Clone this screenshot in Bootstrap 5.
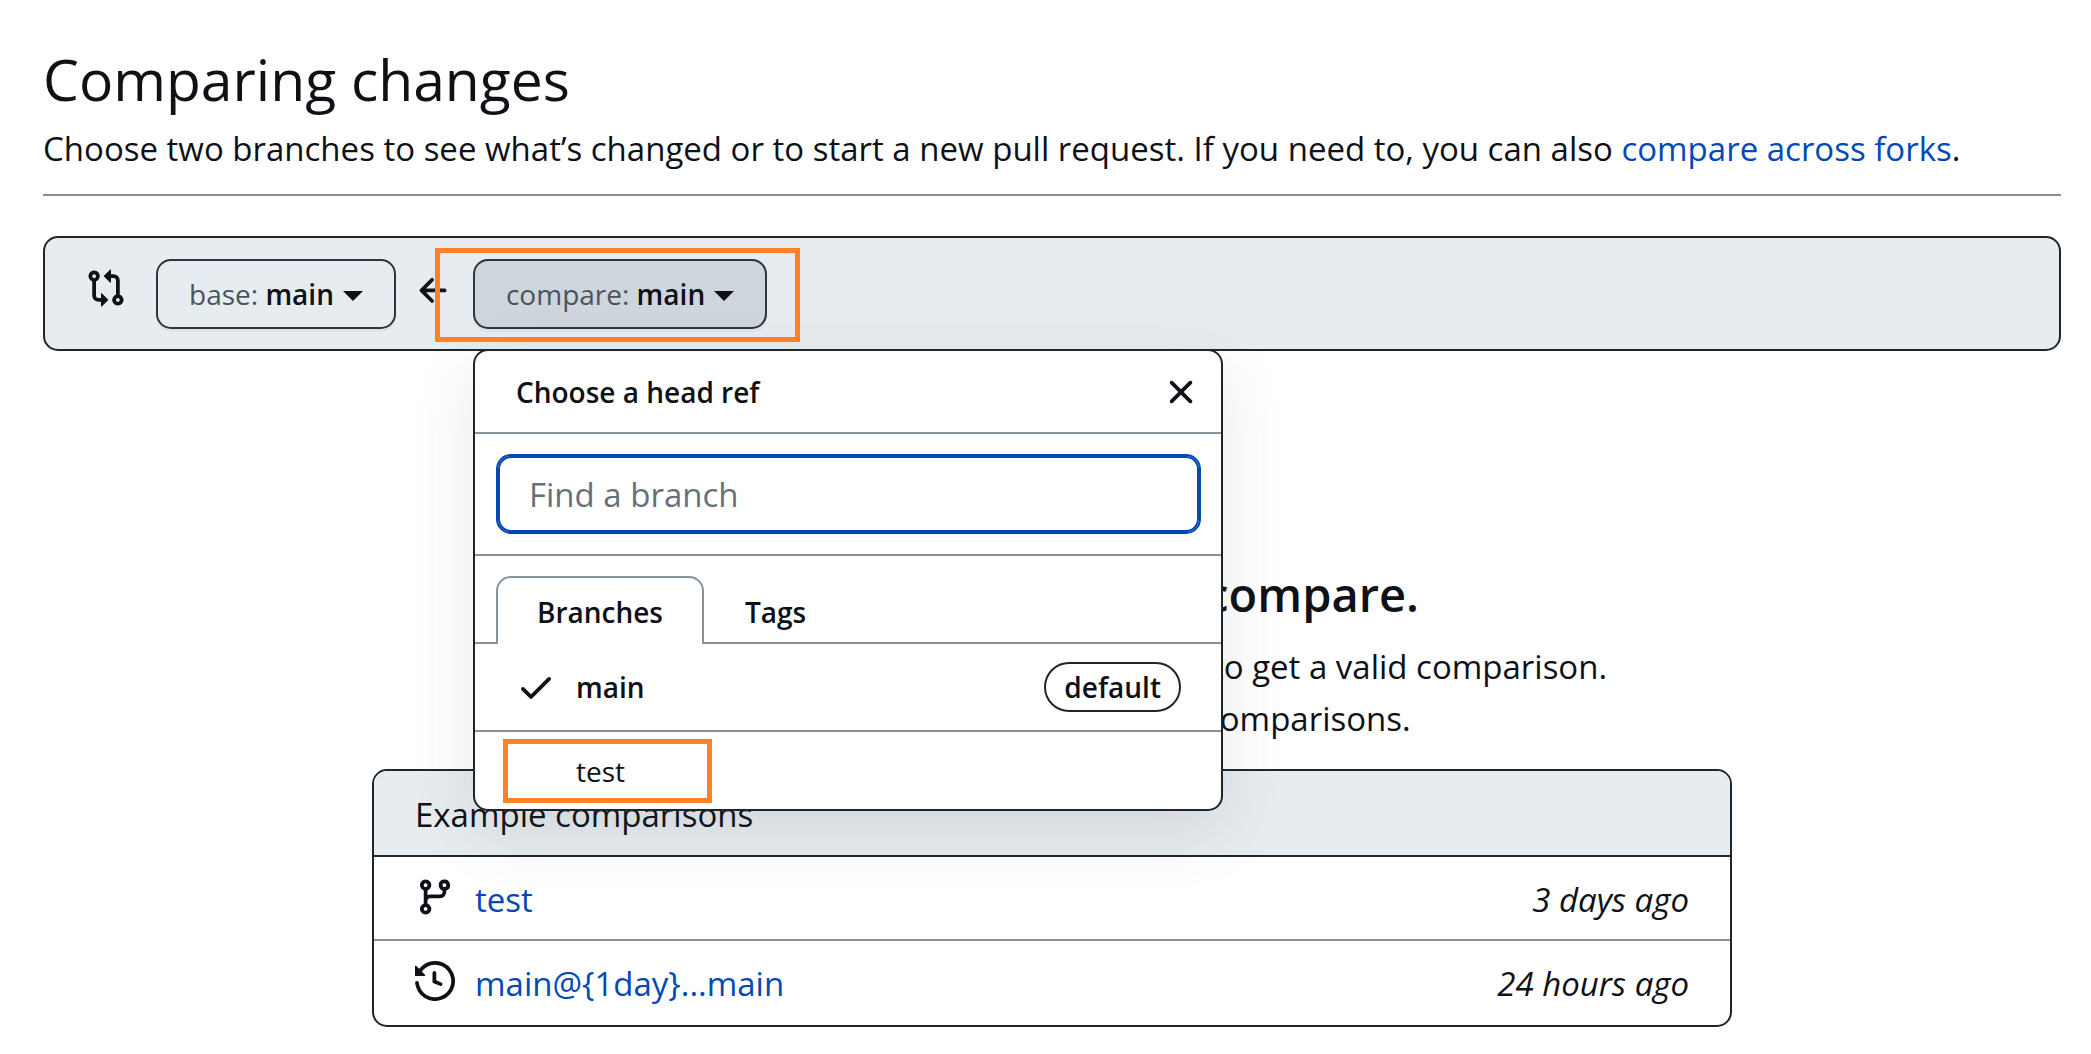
<!DOCTYPE html>
<html lang="en">
<head>
<meta charset="utf-8">
<meta name="viewport" content="width=device-width, initial-scale=1">
<title>Comparing changes</title>
<link href="https://cdn.jsdelivr.net/npm/bootstrap@5.3.0/dist/css/bootstrap.min.css" rel="stylesheet">
<style>
  :root { --ink: #0e1116; --line: #20252c; --line-muted: #88929d; --subtle: #e7ecf0; --accent: #0349b4; --marker: #ff8127; }
  body { font-family: "Open Sans", "Noto Sans", sans-serif; font-size: 33px; line-height: 52px; color: var(--ink); background: #fff; }
  a { color: var(--accent); text-decoration: none; }
  .page { padding: 41px 30px 24px 43px; }
  .page-title { font-size: 57px; line-height: 76px; font-weight: 400; margin: 0 0 6px; }
  .page-head { border-bottom: 2px solid var(--line-muted); padding-bottom: 19px; margin-bottom: 40px; }
  .range-bar { background: var(--subtle); border: 2px solid var(--line); border-radius: 15px; padding: 21px 41px 20px; }
  .range-icon { margin: 0 30px 12px 0; }
  .arrow-icon { margin: 0 19px 6px 18px; }
  .ref-btn { height: 70px; padding: 0 31px; border: 2px solid #2f353c; border-radius: 15px; background: var(--subtle); color: var(--ink); font-size: 28px; line-height: 40px; font-weight: 600; box-shadow: 0 3px 0 rgba(31,35,40,.04); }
  .ref-btn span { color: #4b535d; font-weight: 500; }
  .ref-btn.picked { background: #ced5dc; }
  .caret { display: inline-block; border: 10px solid transparent; border-top-color: currentColor; border-bottom: 0; margin-left: 9px; vertical-align: 4px; }
  .marked::after { content: ""; position: absolute; border: 5px solid var(--marker); pointer-events: none; z-index: 30; }
  .ref-picker.marked::after { inset: -11px -33px -13px -38px; }
  .ref-menu { position: absolute; top: 90px; left: 0; z-index: 20; width: 750px; background: #fff; border: 2px solid var(--line); border-radius: 15px; overflow: hidden; font-size: 28px; line-height: 40px; box-shadow: 0 21px 62px rgba(66,74,83,.13); }
  .menu-head { height: 83px; padding: 0 16px 0 41px; border-bottom: 2px solid var(--line-muted); font-weight: 600; }
  .menu-close { background: none; border: 0; padding: 0; width: 48px; height: 48px; }
  .menu-filter { padding: 20px 20px 20px 21px; border-bottom: 2px solid var(--line-muted); }
  .menu-filter input { height: 80px; border: 2px solid var(--accent); border-radius: 15px; padding: 0 31px; font-size: 33px; color: var(--ink); box-shadow: inset 0 0 0 2px var(--accent); }
  .menu-filter input:focus { border-color: var(--accent); box-shadow: inset 0 0 0 2px var(--accent); }
  .menu-filter input::placeholder { color: #66707b; }
  .menu-tabs { padding: 20px 21px 0; box-shadow: inset 0 -2px 0 var(--line-muted); }
  .menu-tab { height: 68px; padding: 2px 39px 0; background: none; border: 2px solid transparent; border-bottom: 0; border-radius: 15px 15px 0 0; font-weight: 600; color: var(--ink); }
  .menu-tab.current { border-color: var(--line-muted); background: #fff; }
  .ref-row { padding: 0 40px 0 41px; gap: 20px; height: 77px; color: var(--ink); }
  .ref-row.first { height: 88px; border-bottom: 2px solid var(--line-muted); font-weight: 600; }
  .ref-row .slot { width: 40px; }
  .ref-row.marked::after { left: 28px; top: 7px; bottom: 6px; width: 209px; }
  .pill { border: 2px solid var(--line); border-radius: 25px; height: 50px; line-height: 46px; padding: 0 18px; }
  .blank { padding-top: 213px; }
  .blank-title { font-size: 47px; line-height: 60px; font-weight: 600; margin: 0 0 17px; }
  .blank-text { margin-bottom: 24px; }
  .examples { width: 100%; max-width: 1360px; border: 2px solid var(--line); border-radius: 15px; overflow: hidden; background: #fff; }
  .ex-head { background: var(--subtle); border-bottom: 2px solid var(--line); padding: 18px 41px 14px; }
  .ex-row { padding: 17px 41px 13px; gap: 20px; }
  .ex-row + .ex-row { border-top: 2px solid var(--line-muted); padding-bottom: 15px; }
  .ex-row svg { margin-bottom: 6px; }
</style>
<script src="https://cdn.jsdelivr.net/npm/bootstrap@5.3.0/dist/js/bootstrap.bundle.min.js"></script>
</head>
<body>
<main class="page">
  <header class="page-head">
    <h1 class="page-title">Comparing changes</h1>
    <p class="mb-0">Choose two branches to see what’s changed or to start a new pull request. If you need to, you can also <a href="#">compare across forks</a>.</p>
  </header>

  <section class="range-bar d-flex align-items-center" aria-label="Branch range">
    <svg class="range-icon flex-shrink-0" width="40" height="40" viewBox="0 0 16 16" fill="currentColor" aria-hidden="true"><path d="M9.573.677A.25.25 0 0 1 10 .854V2.5h1A2.5 2.5 0 0 1 13.5 5v5.628a2.251 2.251 0 1 1-1.5 0V5a1 1 0 0 0-1-1h-1v1.646a.25.25 0 0 1-.427.177L7.177 3.427a.25.25 0 0 1 0-.354ZM6 12v-1.646a.25.25 0 0 1 .427-.177l2.396 2.396a.25.25 0 0 1 0 .354l-2.396 2.396A.25.25 0 0 1 6 15.146V13.5H5A2.5 2.5 0 0 1 2.5 11V5.372a2.25 2.25 0 1 1 1.5 0V11a1 1 0 0 0 1 1ZM4 3.25a.75.75 0 1 0-1.5 0 .75.75 0 0 0 1.5 0ZM12.75 12a.75.75 0 1 0 0 1.5.75.75 0 0 0 0-1.5Z"/></svg>
    <button type="button" class="ref-btn"><span>base:</span> main<i class="caret"></i></button>
    <svg class="arrow-icon flex-shrink-0" width="40" height="40" viewBox="0 0 16 16" fill="currentColor" aria-hidden="true"><path d="M7.78 12.53a.75.75 0 0 1-1.06 0L2.47 8.28a.75.75 0 0 1 0-1.06l4.25-4.25a.751.751 0 0 1 1.042.018.751.751 0 0 1 .018 1.042L4.81 7h7.44a.75.75 0 0 1 0 1.5H4.81l2.97 2.97a.75.75 0 0 1 0 1.06Z"/></svg>
    <div class="ref-picker marked position-relative">
      <button type="button" class="ref-btn picked" aria-expanded="true"><span>compare:</span> main<i class="caret"></i></button>
      <div class="ref-menu">
        <div class="menu-head d-flex align-items-center justify-content-between">
          <span>Choose a head ref</span>
          <button type="button" class="menu-close d-flex align-items-center justify-content-center" aria-label="Close">
            <svg width="40" height="40" viewBox="0 0 16 16" fill="#0e1116" aria-hidden="true"><path d="M3.72 3.72a.75.75 0 0 1 1.06 0L8 6.94l3.22-3.22a.749.749 0 0 1 1.275.326.749.749 0 0 1-.215.734L9.06 8l3.22 3.22a.749.749 0 0 1-.326 1.275.749.749 0 0 1-.734-.215L8 9.06l-3.22 3.22a.751.751 0 0 1-1.042-.018.751.751 0 0 1-.018-1.042L6.94 8 3.72 4.78a.75.75 0 0 1 0-1.06Z"/></svg>
          </button>
        </div>
        <div class="menu-filter">
          <input type="text" class="form-control" placeholder="Find a branch" aria-label="Find a branch">
        </div>
        <div class="menu-tabs d-flex" role="tablist">
          <button type="button" class="menu-tab current" role="tab" aria-selected="true">Branches</button>
          <button type="button" class="menu-tab" role="tab" aria-selected="false">Tags</button>
        </div>
        <a href="#" class="ref-row first d-flex align-items-center">
          <svg class="slot" width="40" height="40" viewBox="0 0 16 16" fill="currentColor" aria-hidden="true"><path d="M13.78 4.22a.75.75 0 0 1 0 1.06l-7.25 7.25a.75.75 0 0 1-1.06 0L2.22 9.28a.751.751 0 0 1 .018-1.042.751.751 0 0 1 1.042-.018L6 10.94l6.72-6.72a.75.75 0 0 1 1.06 0Z"/></svg>
          <span class="flex-grow-1">main</span>
          <span class="pill">default</span>
        </a>
        <a href="#" class="ref-row marked position-relative d-flex align-items-center">
          <span class="slot"></span>
          <span>test</span>
        </a>
      </div>
    </div>
  </section>

  <section class="blank d-flex flex-column align-items-center">
    <h2 class="blank-title">There isn’t anything to compare.</h2>
    <p class="blank-text text-center">You’ll need to use two different branch names to get a valid comparison.<br>You can also check some sample comparisons.</p>
    <div class="examples">
      <div class="ex-head">Example comparisons</div>
      <div class="ex-row d-flex align-items-center">
        <svg width="40" height="40" viewBox="0 0 16 16" fill="currentColor" aria-hidden="true"><path d="M9.5 3.25a2.25 2.25 0 1 1 3 2.122V6A2.5 2.5 0 0 1 10 8.5H6a1 1 0 0 0-1 1v1.128a2.251 2.251 0 1 1-1.5 0V5.372a2.25 2.25 0 1 1 1.5 0v1.836A2.493 2.493 0 0 1 6 7h4a1 1 0 0 0 1-1v-.628A2.25 2.25 0 0 1 9.5 3.25Zm-6 0a.75.75 0 1 0 1.5 0 .75.75 0 0 0-1.5 0Zm8.25-.75a.75.75 0 1 0 0 1.5.75.75 0 0 0 0-1.5ZM4.25 12a.75.75 0 1 0 0 1.5.75.75 0 0 0 0-1.5Z"/></svg>
        <a href="#" class="flex-grow-1">test</a>
        <em>3 days ago</em>
      </div>
      <div class="ex-row d-flex align-items-center">
        <svg width="40" height="40" viewBox="0 0 16 16" fill="currentColor" aria-hidden="true"><path d="m.427 1.927 1.215 1.215a8.002 8.002 0 1 1-1.6 5.685.75.75 0 1 1 1.493-.154 6.5 6.5 0 1 0 1.18-4.458l1.358 1.358A.25.25 0 0 1 3.896 6H.25A.25.25 0 0 1 0 5.75V2.104a.25.25 0 0 1 .427-.177ZM7.75 4a.75.75 0 0 1 .75.75v2.992l2.028.812a.75.75 0 0 1-.557 1.392l-2.5-1A.751.751 0 0 1 7 8.25v-3.5A.75.75 0 0 1 7.75 4Z"/></svg>
        <a href="#" class="flex-grow-1">main@{1day}...main</a>
        <em>24 hours ago</em>
      </div>
    </div>
  </section>
</main>
</body>
</html>
